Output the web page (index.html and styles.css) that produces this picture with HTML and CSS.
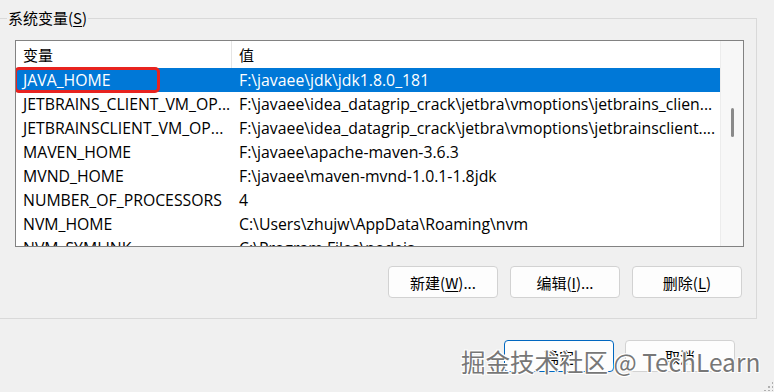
FILE: index.html
```html
<!DOCTYPE html>
<html lang="zh">
<head>
<meta charset="utf-8">
<link rel="stylesheet" href="styles.css">
</head>
<body>
<div class="dialog">
  <fieldset class="group">
    <legend class="group-title">系统变量(<u>S</u>)</legend>
    <div class="list">
      <div class="list-body">
        <div class="row header">
          <div class="c1">变量</div>
          <div class="c2">值</div>
        </div>
        <div class="row selected">
          <div class="c1">JAVA_HOME</div>
          <div class="c2">F:\javaee\jdk\jdk1.8.0_181</div>
          <div class="mark"></div>
        </div>
        <div class="row">
          <div class="c1">JETBRAINS_CLIENT_VM_OP...</div>
          <div class="c2">F:\javaee\idea_datagrip_crack\jetbra\vmoptions\jetbrains_clien...</div>
        </div>
        <div class="row">
          <div class="c1">JETBRAINSCLIENT_VM_OP...</div>
          <div class="c2">F:\javaee\idea_datagrip_crack\jetbra\vmoptions\jetbrainsclient....</div>
        </div>
        <div class="row">
          <div class="c1">MAVEN_HOME</div>
          <div class="c2">F:\javaee\apache-maven-3.6.3</div>
        </div>
        <div class="row">
          <div class="c1">MVND_HOME</div>
          <div class="c2">F:\javaee\maven-mvnd-1.0.1-1.8jdk</div>
        </div>
        <div class="row">
          <div class="c1">NUMBER_OF_PROCESSORS</div>
          <div class="c2">4</div>
        </div>
        <div class="row">
          <div class="c1">NVM_HOME</div>
          <div class="c2">C:\Users\zhujw\AppData\Roaming\nvm</div>
        </div>
        <div class="row">
          <div class="c1">NVM_SYMLINK</div>
          <div class="c2">C:\Program Files\nodejs</div>
        </div>
      </div>
      <div class="scrollbar"><div class="thumb"></div></div>
    </div>
    <div class="actions">
      <button class="btn">新建(<u>W</u>)...</button>
      <button class="btn">编辑(<u>I</u>)...</button>
      <button class="btn">删除(<u>L</u>)</button>
    </div>
  </fieldset>
  <div class="footer">
    <button class="btn default">确定</button>
    <button class="btn">取消</button>
  </div>
</div>
<div class="watermark">掘金技术社区 @ TechLearn</div>
<div class="grip"></div>
</body>
</html>
```
FILE: styles.css
```css
html, body {
  margin: 0;
  padding: 0;
}
body {
  width: 774px;
  height: 392px;
  overflow: hidden;
  background: #f0f0f0;
  font-family: "Open Sans", "Noto Sans CJK SC", sans-serif;
  font-size: 15.8px;
  color: #000;
  position: relative;
}
.dialog {
  padding-top: 10px;
}
.group {
  margin: 0 0 0 -3px;
  width: 760px;
  height: 309px;
  box-sizing: border-box;
  border: 1px solid #d9d9d9;
  padding: 0;
  min-width: 0;
}
.group-title {
  margin-left: 9px;
  padding: 0 1px;
  font-family: "Noto Sans CJK SC", sans-serif;
  font-size: 15px;
  line-height: 16px;
}
.group-title u, .btn u {
  text-decoration-thickness: 1px;
  text-underline-offset: 2px;
}
.list {
  margin: 14px 0 0 17px;
  width: 729px;
  height: 207px;
  box-sizing: border-box;
  border: 1px solid #828282;
  background: #fff;
  display: flex;
  overflow: hidden;
}
.list-body {
  width: 704px;
  flex: none;
}
.row {
  display: flex;
  height: 24px;
  align-items: center;
  white-space: nowrap;
  position: relative;
}
.row .c1 {
  width: 216px;
  padding-left: 7px;
  box-sizing: border-box;
  flex: none;
}
.row .c2 {
  padding-left: 7px;
}
.header {
  height: 27px;
  font-family: "Noto Sans CJK SC", sans-serif;
  font-size: 15px;
}
.header .c1 {
  border-right: 1px solid #e5e5e5;
  height: 27px;
  line-height: 27px;
}
.selected {
  background: #0078d7;
  color: #fff;
}
.mark {
  position: absolute;
  left: -2px;
  top: -1px;
  width: 146px;
  height: 26px;
  box-sizing: border-box;
  border: 3px solid #e8231f;
  border-radius: 5px;
}
.scrollbar {
  width: 23px;
  flex: none;
  background: #f7f7f7;
  border-left: 1px solid #ececec;
  padding-top: 67px;
  box-sizing: border-box;
  display: flex;
  justify-content: center;
}
.thumb {
  width: 3px;
  height: 29px;
  background: #8a8a8a;
  border-radius: 2px;
}
.actions {
  display: flex;
  justify-content: flex-end;
  gap: 12px;
  margin: 19px 14px 0 0;
}
.btn {
  width: 110px;
  height: 32px;
  box-sizing: border-box;
  background: #fdfdfd;
  border: 1px solid #d2d2d2;
  border-radius: 4px;
  font-family: "Noto Sans CJK SC", sans-serif;
  font-size: 15px;
  color: #000;
  padding: 0;
}
.default {
  border: 1px solid #0067c0;
}
.footer {
  display: flex;
  justify-content: flex-end;
  gap: 11px;
  margin: 21px 39px 0 0;
}
.watermark {
  position: absolute;
  left: 461px;
  top: 345px;
  font-family: "Noto Sans CJK SC", sans-serif;
  font-size: 24.5px;
  line-height: 34px;
  color: #777;
  white-space: nowrap;
  text-shadow: 1px 1px 0 #fff, -1px -1px 0 #fff, 1px -1px 0 #fff, -1px 1px 0 #fff;
}
.grip {
  position: absolute;
  right: 1px;
  bottom: 1px;
  width: 10px;
  height: 10px;
  background-image: radial-gradient(circle, #b0b0b0 1px, transparent 1.2px);
  background-size: 4px 4px;
  clip-path: polygon(100% 0, 100% 100%, 0 100%);
}
```
